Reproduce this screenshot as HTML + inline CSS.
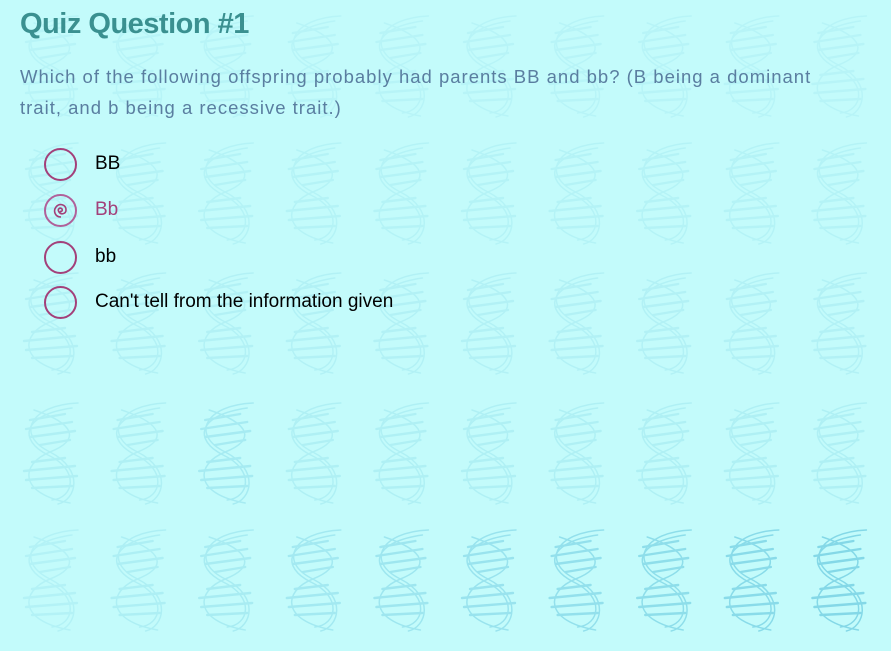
<!DOCTYPE html>
<html><head><meta charset="utf-8"><style>
html,body{margin:0;padding:0}
body{width:891px;height:651px;background:#c3fbfb;position:relative;overflow:hidden;font-family:"Liberation Sans",sans-serif}
svg.bg{position:absolute;left:0;top:0}
h1{position:absolute;left:20px;top:8px;margin:0;font-size:29px;font-weight:bold;color:#3a9090;letter-spacing:-0.5px}
.q{position:absolute;left:20px;top:61px;width:810px;font-size:18.5px;line-height:31px;color:#5a7ea0;letter-spacing:1px}
.opt{position:absolute;left:44px;height:34px;display:flex;align-items:center}
.c{width:33px;height:33px;border:2px solid #a3407a;border-radius:50%;box-sizing:border-box;position:relative}
.opt span{margin-left:18px;font-size:19px;color:#000}
</style></head><body>
<svg class="bg" width="891" height="651">
<defs>
<g id="h" fill="none" stroke="#6ccbe0" stroke-width="1.5" stroke-linecap="round">
<path d="M58,3 C10,5 -5,35 30,52 C65,70 56,100 38,104"/>
<path d="M52,8 C2,15 -2,40 28,55 C60,70 54,98 32,100"/>
<path d="M14,10 C56,24 60,40 30,52 C0,64 -2,94 50,103"/>
<g stroke-width="2.4">
<path d="M10,20 L45,14 M6,29 L52,22 M10,37 L55,31 M20,45 L50,40"/>
<path d="M12,62 L45,58 M4,71 L55,66 M6,80 L57,76 M12,88 L52,86"/>
</g>
</g>
</defs>
<g id="grid"></g>
</svg>
<h1>Quiz Question #1</h1>
<div class="q">Which of the following offspring probably had parents BB and bb? (B being a dominant trait, and b being a recessive trait.)</div>
<div class="opt" style="top:147px"><div class="c"></div><span>BB</span></div>
<div class="opt" style="top:193px"><div class="c" style="border-color:#b0609a"><svg width="29" height="29" style="position:absolute;left:0;top:0"><path d="M15,21 C9,21 7,15 10,11 C13,7 20,8 20,14 C20,18 15,19 13,16 C11,13 14,11 16,13 C17,15 15,16 14,15" fill="none" stroke="#a3407a" stroke-width="1.6"/></svg></div><span style="color:#a3407a">Bb</span></div>
<div class="opt" style="top:240px"><div class="c"></div><span>bb</span></div>
<div class="opt" style="top:285px"><div class="c"></div><span>Can't tell from the information given</span></div>
<script>
var g=document.getElementById('grid'),s='';
var tops=[13,140,270,400,527];
for(var r=0;r<5;r++)for(var c=0;c<10;c++){
 var x=20+c*87.6,y=tops[r];
 var o=r<4?0.13+r*0.03:0.18+c*0.06;
 if(r==3&&c==2)o=0.33;
 s+='<use href="#h" x="'+x+'" y="'+y+'" opacity="'+o.toFixed(2)+'"/>';
}
g.innerHTML=s;
</script>
</body></html>
